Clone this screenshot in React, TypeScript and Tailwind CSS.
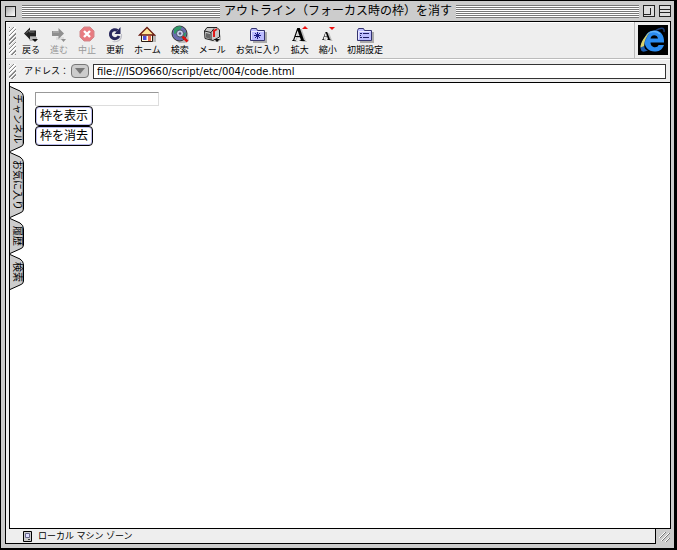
import React, { useState } from 'react'

const Svg: React.FC<{ children: React.ReactNode }> = ({ children }) => (
  <svg viewBox="0 0 20 20" className="-mx-1 h-5 w-5 shrink-0" aria-hidden="true">
    {children}
  </svg>
)

const BackIcon = () => (
  <Svg>
    <path d="M7 12h9v4H9z" fill="#b5b5b5" />
    <path d="M3 8.5 9 2.5v3h6v6H9v3z" fill="#222" />
    <path d="M5 8.5 8.5 5v2h5" fill="none" stroke="#777" />
    <path d="M11 14h6l-3 3z" fill="#111" />
  </Svg>
)

const ForwardIcon = () => (
  <Svg>
    <path d="M7 12h8v3H7z" fill="#ddd" />
    <path d="M15 8.5 9.5 3v3H3v5h6.5v3z" fill="#8f8f8f" />
    <path d="M4 7h6" stroke="#bbb" />
    <path d="M12 14h5l-2.5 3z" fill="#8f8f8f" />
  </Svg>
)

const StopIcon = () => (
  <Svg>
    <path d="M7 2h6l4 4v6l-4 4H7l-4-4V6z" fill="#e87b80" stroke="#d0888b" />
    <path d="m7 6 6 6m0-6-6 6" stroke="#fff" strokeWidth="2.4" />
  </Svg>
)

const RefreshIcon = () => (
  <Svg>
    <path d="M7 16c5 1 9-1 9-7h1c1 6-4 9-9 8z" fill="#c0c0c8" />
    <path d="M12.5 5.5A4.500 4.500 0 1 0 14 11" fill="none" stroke="#27275c" strokeWidth="3" />
    <path d="M15.500 2v7H9.500z" fill="#27275c" />
  </Svg>
)

const HomeIcon = () => (
  <Svg>
    <path d="M6 17h13v-7l-3-2z" fill="#b8b8b8" />
    <path d="M4.500 9.500h11v7h-11z" fill="#fffbe0" stroke="#2b1a10" />
    <path d="m2.500 10 7.500-7.500 7.500 7.500z" fill="#ffe79a" stroke="#6b1a10" strokeWidth="1.300" />
    <path d="M6 11h3.500v4H6z" fill="#4b4bd8" />
    <path d="M11 11h3v5h-3z" fill="#e86a50" />
  </Svg>
)

const SearchIcon = () => (
  <Svg>
    <path d="M6 15h9l3-7 1 8-4 2H9z" fill="#bbb" />
    <circle cx="9.500" cy="8.500" r="7.500" fill="#6a6cae" stroke="#333" />
    <path d="M4 4c2-3 6-3.500 8-2l-3 5-5 2zM11 10l5-3c0 4-2 6-4 7z" fill="#2f9a68" />
    <circle cx="10" cy="8.500" r="3.600" fill="#c9cdea" stroke="#456" />
    <circle cx="10" cy="8.500" r="1.300" fill="#557" />
    <path d="m12.500 11.500 5 5" stroke="#d11" strokeWidth="2.500" />
  </Svg>
)

const MailIcon = () => (
  <Svg>
    <path d="M7 16h9l3-7v6l-3 2z" fill="#bbb" />
    <path d="M2.500 6 5 2.500h10L17.500 5v7L11 15.500l-8-2z" fill="#c9c9c9" stroke="#222" />
    <path d="M2.500 6 9 7.500V15m0-7.500 3-4" fill="none" stroke="#222" />
    <path d="M4 8v4.500l4 1.500V9z" fill="#666" />
    <path d="M12 12V6l3-2" fill="none" stroke="#e01818" strokeWidth="2" />
    <path d="M12 14h6l-3 3z" fill="#111" />
  </Svg>
)

const Folder: React.FC<{ children: React.ReactNode }> = ({ children }) => (
  <Svg>
    <path d="M5 7h14v11H5z" fill="#aaa" />
    <path d="M2.500 15.500v-10l1-2h5l1 2h7v10z" fill="#bcbcff" stroke="#33336f" />
    <path d="M3.500 14.500v-8h12" fill="none" stroke="#e9e9ff" />
    {children}
  </Svg>
)

const FavoritesIcon = () => (
  <Folder>
    <path d="M9.500 7v7M6 10.500h7M7 8l5 5m0-5-5 5" stroke="#1d1d86" />
  </Folder>
)

const PrefsIcon = () => (
  <Folder>
    <path d="M5 8.500h2M8 8.500h6M5 12.500h2M8 12.500h6" stroke="#1d1d66" />
    <path d="M5 10.500h1" stroke="#1d1d66" />
  </Folder>
)

const LargerIcon = () => (
  <Svg>
    <text
      x="2"
      y="16"
      className="fill-black font-['Liberation_Serif',serif] text-[18px] font-bold drop-shadow-[2px_1px_0_#bdbdbd]"
    >
      A
    </text>
    <path d="M12 4h6l-3-3z" fill="#e11" />
  </Svg>
)

const SmallerIcon = () => (
  <Svg>
    <text
      x="4"
      y="15"
      className="fill-black font-['Liberation_Serif',serif] text-[12px] font-bold drop-shadow-[2px_1px_0_#bdbdbd]"
    >
      A
    </text>
    <path d="M11 2h6l-3 3z" fill="#e11" />
  </Svg>
)

const ExplorerLogo = () => (
  <svg viewBox="0 0 30 30" className="h-[30px] w-[30px] bg-black" role="img" aria-label="Internet Explorer">
    <path d="M17 6C22 2.500 27 2 26 7" fill="none" stroke="#173c78" strokeWidth="1.500" />
    <path
      d="M26 17.500H12.500C12.500 23 19.500 23.500 20.500 20H26C24 25.500 20.500 26.500 16.500 26.500 10.500 26.500 6.500 22 6.500 16S10.500 5.500 16.500 5.500 26.500 10 26 17.500ZM12.500 13.500H20C19.500 9 13 9 12.500 13.500Z"
      fill="#2b8cf0"
      fillRule="evenodd"
    />
    <path d="M9 11c2-5 9-6 13-2" fill="none" stroke="#67b6fb" strokeWidth="1.500" />
    <path d="M13 6.500C6 11 1 21 3 25c1 2.500 4 2 7 0-6 0-4-10 3-18.500z" fill="#1d5cae" />
    <path d="M12 7C6 11.500 2.500 18 2.500 22.500L6 21c0-5 2.500-10 6-14z" fill="#d9d26a" />
  </svg>
)

const DragHandle: React.FC<{ className: string }> = ({ className }) => (
  <div
    className={`w-[7px] shrink-0 bg-[repeating-linear-gradient(135deg,#888_0_1px,#fff_1px_2px,#e4e4e4_2px_3px)] ${className}`}
  />
)

const Stripes = () => (
  <div className="h-[13px] flex-1 bg-[repeating-linear-gradient(180deg,#777_0_1px,#fff_1px_2px)]" />
)

const tools = [
  { label: '戻る', icon: <BackIcon /> },
  { label: '進む', icon: <ForwardIcon />, disabled: true },
  { label: '中止', icon: <StopIcon />, disabled: true },
  { label: '更新', icon: <RefreshIcon /> },
  { label: 'ホーム', icon: <HomeIcon /> },
  { label: '検索', icon: <SearchIcon /> },
  { label: 'メール', icon: <MailIcon /> },
  { label: 'お気に入り', icon: <FavoritesIcon /> },
  { label: '拡大', icon: <LargerIcon /> },
  { label: '縮小', icon: <SmallerIcon /> },
  { label: '初期設定', icon: <PrefsIcon /> }
]

const SideTab: React.FC<{ label: string; size: number }> = ({ label, size }) => (
  <button
    type="button"
    className="relative flex w-[14px] items-center justify-center"
    style={{ height: size }}
  >
    <svg viewBox={`0 0 14 ${size}`} className="absolute inset-0 h-full w-full" aria-hidden="true">
      <path
        d={`M0 .5 10 5Q13.500 7 13.500 11V${size - 9}Q13.500 ${size - 6} 10 ${size - 5}L0 ${size - 0.5}`}
        fill="#ccc"
        stroke="#000"
      />
      <path d={`M12.500 9V${size - 8}`} stroke="#999" />
    </svg>
    <span className="relative text-[10px] leading-[13px] [text-orientation:sideways] [writing-mode:vertical-rl]">
      {label}
    </span>
  </button>
)

const App: React.FC = () => {
  const [url, setUrl] = useState('file:///ISO9660/script/etc/004/code.html')
  const [outline, setOutline] = useState(true)

  return (
    <div className="flex h-screen flex-col border-t border-r-3 border-b-2 border-l border-black bg-[#ccc] pr-[3px] pl-1 font-['Liberation_Sans','Noto_Sans_CJK_JP',sans-serif] text-black">
      {/* Title bar */}
      <header className="flex h-5 shrink-0 items-center gap-1">
        <div className="flex flex-1 items-center gap-1.5">
          <button
            type="button"
            aria-label="閉じる"
            className="h-[11px] w-[11px] border border-[#222] bg-linear-to-br from-[#aaa] to-white"
          />
          <Stripes />
        </div>
        <h1 className="text-xs leading-4 whitespace-nowrap">アウトライン（フォーカス時の枠）を消す</h1>
        <div className="flex flex-1 items-center gap-1">
          <Stripes />
          <button type="button" aria-label="拡大表示" className="h-3 w-3 border border-[#222] bg-[#ddd]">
            <span className="block h-[7px] w-[7px] border-r border-b border-[#222]" />
          </button>
          <button
            type="button"
            aria-label="折りたたむ"
            className="flex h-3 w-3 items-center border border-[#222] bg-[#ddd]"
          >
            <span className="block h-1 w-full border-y border-[#222]" />
          </button>
        </div>
      </header>

      <div className="flex min-h-0 flex-1 flex-col border-x border-t border-black bg-[#eee]">
        {/* Toolbar */}
        <div className="flex h-[37px] shrink-0 border-b border-[#bbb]">
          <nav className="flex flex-1 items-start gap-[10px] border-t border-white pl-[3px]">
            <DragHandle className="-mr-1 mt-1 h-7" />
            {tools.map((tool) => (
              <button
                key={tool.label}
                type="button"
                disabled={tool.disabled}
                className="flex flex-col items-center pt-0.5 disabled:text-[#999]"
              >
                {tool.icon}
                <span className="text-[9px] leading-[11px] whitespace-nowrap">{tool.label}</span>
              </button>
            ))}
          </nav>
          <div className="flex w-9 items-center justify-center border-l border-[#bbb]">
            <ExplorerLogo />
          </div>
        </div>

        {/* Address bar */}
        <div className="flex h-[23px] shrink-0 items-center border-t border-white pr-1 pl-[3px]">
          <DragHandle className="h-[15px]" />
          <label htmlFor="address" className="ml-2 text-[9px] leading-3">
            アドレス：
          </label>
          <button
            type="button"
            aria-label="履歴を表示"
            className="mr-1 ml-0.5 flex h-[14px] w-[18px] items-center justify-center rounded-sm border border-[#777] bg-[#ccc]"
          >
            <svg viewBox="0 0 10 6" className="h-1.5 w-2.5" aria-hidden="true">
              <path d="M0 0h10L5 6z" fill="#777" />
            </svg>
          </button>
          <input
            id="address"
            type="text"
            value={url}
            onChange={(e) => setUrl(e.target.value)}
            className="h-[15px] min-w-0 flex-1 border border-[#333] bg-white px-[3px] font-['DejaVu_Sans',sans-serif] text-[10px] leading-3 outline-none"
          />
        </div>

        {/* Page */}
        <main className="ml-[3px] flex min-h-0 flex-1 border-y border-l border-black bg-white">
          <nav className="flex w-[15px] shrink-0 flex-col pt-[3px]">
            <SideTab label="チャンネル" size={66} />
            <SideTab label="お気に入り" size={66} />
            <SideTab label="履歴" size={36} />
            <SideTab label="検索" size={36} />
          </nav>
          <form className="flex flex-col items-start pt-[9px] pl-2.5" onSubmit={(e) => e.preventDefault()}>
            <input
              type="text"
              aria-label="テキスト"
              className={`h-[14px] w-[124px] border border-t-[#999] border-r-[#ddd] border-b-[#ddd] border-l-[#999] px-1 text-xs ${outline ? '' : 'outline-none'}`}
            />
            <button
              type="button"
              onClick={() => setOutline(true)}
              className="h-5 rounded-[4px] border border-black px-1 text-xs leading-4 shadow-[inset_0_0_0_1px_#bbbbee]"
            >
              枠を表示
            </button>
            <button
              type="button"
              onClick={() => setOutline(false)}
              className="h-5 rounded-[4px] border border-black px-1 text-xs leading-4 shadow-[inset_0_0_0_1px_#bbbbee]"
            >
              枠を消去
            </button>
          </form>
        </main>
      </div>

      {/* Status bar */}
      <footer className="flex h-[19px] shrink-0 items-start">
        <div className="flex h-[15px] flex-1 items-center gap-1.5 border-x border-b border-black bg-[#eee] pl-[17px]">
          <svg viewBox="0 0 9 11" className="h-[11px] w-[9px]" aria-hidden="true">
            <path d="M.5.5h8v10h-8z" fill="#ccc" stroke="#000" />
            <path d="M2.500 2.500h4v4h-4z" fill="#ddf" stroke="#668" />
            <path d="M5 8.500h2" stroke="#333" />
          </svg>
          <span className="text-[9px] leading-3">ローカル マシン ゾーン</span>
        </div>
        <svg viewBox="0 0 15 15" className="h-[15px] w-[15px]" aria-hidden="true">
          <path d="m3 9 6-6M5 12l8-8M9 13l4-4" stroke="#fff" />
          <path d="m4 9 6-6M6 12l8-8M10 13l4-4" stroke="#777" />
        </svg>
      </footer>
    </div>
  )
}

export default App
